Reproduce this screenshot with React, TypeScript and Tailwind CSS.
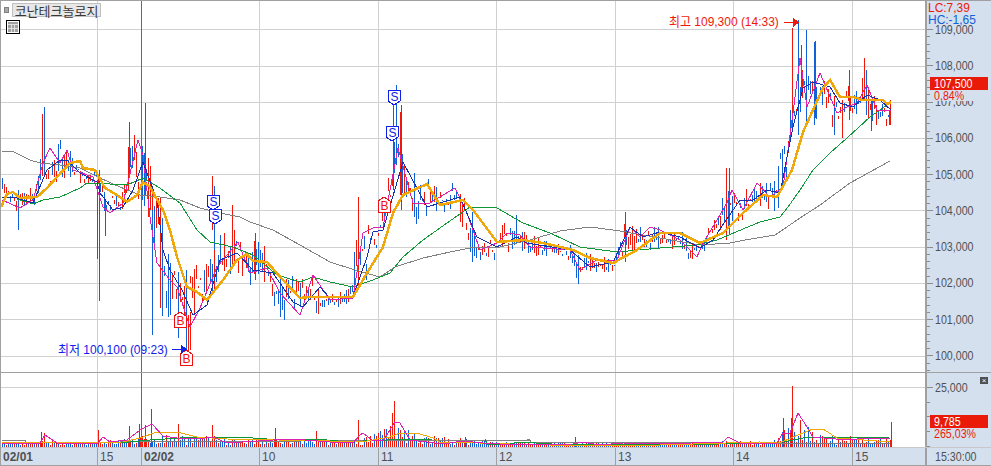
import React from "react";

type Pt = [number, number];
type Bar = [number, number, number, string];

const RED = "#f01808";
const BLUE = "#1060d8";

const gridY = [29, 66, 102, 138, 174, 210, 247, 283, 319, 356];
const gridX = [97, 259, 378, 496, 615, 733, 852];

const prices = ["109,000", "108,000", "107,000", "106,000", "105,000", "104,000", "103,000", "102,000", "101,000", "100,000"];

const gray: Pt[] = [[2, 152], [12, 151], [20, 155], [30, 160], [40, 163], [60, 165], [80, 168], [100, 178], [120, 187], [140, 195], [160, 197], [180, 200], [200, 208], [220, 213], [240, 217], [250, 222], [273, 230], [300, 245], [330, 262], [355, 270], [380, 277], [395, 267], [423, 258], [450, 252], [470, 248], [500, 247], [530, 240], [560, 231], [590, 227], [620, 231], [660, 238], [700, 245], [730, 243], [745, 240], [775, 235], [784, 229], [800, 218], [820, 205], [850, 183], [890, 161]];
const green: Pt[] = [[17, 199], [33, 204], [43, 200], [60, 197], [80, 188], [87, 183], [110, 184], [127, 185], [143, 178], [160, 188], [180, 203], [197, 230], [210, 242], [233, 247], [253, 255], [277, 275], [300, 282], [313, 277], [330, 282], [353, 287], [373, 280], [390, 273], [403, 257], [423, 240], [447, 223], [470, 207], [497, 208], [523, 223], [550, 233], [580, 247], [617, 252], [660, 248], [697, 245], [717, 240], [743, 229], [760, 222], [780, 217], [788, 207], [800, 190], [813, 170], [830, 153], [847, 138], [870, 117], [890, 103]];
const orange: Pt[] = [[1, 207], [7, 194], [13, 192], [20, 198], [37, 197], [47, 188], [57, 177], [70, 163], [80, 161], [83, 168], [95, 170], [105, 188], [117, 195], [127, 202], [137, 195], [143, 182], [150, 187], [163, 210], [170, 230], [177, 257], [187, 287], [197, 292], [207, 300], [223, 280], [237, 260], [247, 254], [253, 261], [267, 262], [283, 280], [300, 298], [310, 297], [330, 297], [353, 297], [367, 273], [383, 247], [393, 213], [403, 195], [427, 184], [440, 205], [463, 200], [473, 210], [497, 242], [523, 240], [543, 243], [573, 250], [590, 258], [613, 263], [637, 250], [660, 233], [680, 233], [700, 243], [723, 233], [743, 213], [763, 195], [777, 197], [792, 170], [803, 132], [823, 88], [830, 80], [840, 97], [853, 97], [863, 100], [883, 100], [887, 104], [891, 102]];
const navy: Pt[] = [[2, 197], [17, 198], [33, 203], [47, 170], [60, 160], [67, 160], [80, 173], [97, 182], [100, 193], [113, 210], [123, 207], [133, 190], [143, 162], [157, 200], [163, 250], [170, 270], [182, 290], [193, 315], [207, 305], [220, 260], [237, 253], [253, 270], [273, 273], [293, 302], [303, 307], [320, 287], [330, 298], [353, 297], [367, 257], [373, 232], [383, 230], [403, 162], [427, 207], [440, 203], [460, 197], [477, 237], [497, 247], [517, 237], [527, 243], [570, 250], [590, 267], [613, 262], [630, 227], [643, 237], [660, 232], [680, 237], [700, 248], [713, 240], [720, 229], [740, 200], [753, 200], [767, 190], [780, 193], [793, 127], [803, 88], [813, 82], [830, 87], [840, 103], [853, 107], [867, 95], [880, 100], [891, 110]];
const pink: Pt[] = [[2, 200], [20, 208], [33, 200], [43, 163], [50, 148], [60, 163], [67, 150], [73, 170], [93, 177], [103, 207], [110, 213], [123, 203], [138, 140], [143, 155], [150, 217], [157, 263], [170, 280], [177, 287], [190, 327], [200, 308], [217, 267], [238, 242], [250, 273], [267, 268], [280, 293], [300, 315], [313, 275], [330, 300], [353, 298], [363, 233], [373, 228], [383, 227], [398, 148], [413, 203], [430, 203], [455, 188], [467, 213], [480, 250], [497, 243], [507, 233], [520, 235], [530, 247], [570, 250], [580, 270], [597, 260], [617, 260], [630, 227], [640, 237], [650, 227], [660, 230], [680, 240], [697, 257], [702, 245], [727, 203], [732, 190], [743, 210], [757, 183], [770, 197], [783, 187], [793, 113], [800, 58], [807, 107], [820, 73], [837, 113], [847, 107], [857, 103], [867, 85], [877, 110], [891, 110]];

const volGray: Pt[] = [[2, 440], [25, 440], [26, 442], [120, 442], [300, 441], [530, 440], [531, 442], [700, 443], [890, 443]];
const volGreen: Pt[] = [[2, 442], [130, 442], [150, 440], [180, 438], [213, 437], [250, 437], [253, 438], [267, 439], [327, 440], [348, 442], [363, 441], [387, 440], [433, 439], [485, 439], [487, 444], [508, 444], [520, 442], [552, 444], [660, 445], [777, 443], [793, 440], [803, 438], [890, 437]];
const volOrange: Pt[] = [[2, 443], [123, 442], [140, 438], [157, 432], [177, 432], [197, 437], [227, 439], [330, 441], [340, 442], [367, 441], [390, 437], [400, 433], [417, 433], [433, 438], [440, 442], [480, 443], [510, 444], [550, 445], [660, 445], [727, 443], [760, 442], [780, 443], [793, 437], [813, 429], [823, 429], [837, 438], [890, 442]];
const volPink: Pt[] = [[2, 444], [40, 443], [45, 435], [57, 443], [98, 443], [103, 437], [110, 442], [127, 440], [140, 430], [152, 424], [163, 436], [177, 438], [197, 439], [213, 437], [227, 443], [273, 440], [293, 439], [330, 442], [353, 443], [360, 435], [363, 433], [372, 440], [383, 441], [395, 422], [400, 423], [410, 440], [443, 444], [463, 441], [483, 443], [517, 445], [573, 444], [583, 442], [600, 445], [623, 443], [660, 444], [723, 442], [728, 437], [740, 443], [777, 443], [783, 433], [790, 433], [798, 413], [807, 427], [813, 437], [847, 440], [867, 438], [890, 438]];

// high / low envelope of the minute bars: x, top, bottom
const env: [number, number, number][] = [[2, 178, 210], [10, 182, 205], [18, 183, 215], [25, 190, 205], [35, 185, 205], [40, 150, 190], [50, 160, 190], [60, 137, 180], [66, 136, 182], [72, 158, 182], [80, 165, 182], [90, 175, 186], [97, 165, 185], [105, 185, 220], [120, 195, 215], [129, 140, 200], [135, 130, 195], [145, 150, 210], [150, 150, 240], [155, 180, 290], [160, 185, 330], [165, 230, 310], [178, 250, 335], [185, 250, 350], [195, 260, 320], [203, 260, 310], [210, 200, 290], [220, 230, 290], [235, 220, 270], [250, 240, 290], [260, 235, 270], [270, 260, 305], [285, 280, 325], [300, 270, 325], [310, 265, 310], [320, 290, 315], [330, 290, 312], [345, 290, 305], [350, 280, 300], [358, 215, 290], [364, 215, 290], [370, 210, 262], [375, 220, 260], [380, 210, 240], [385, 198, 222], [392, 150, 200], [396, 120, 160], [400, 130, 195], [405, 150, 225], [410, 165, 230], [420, 180, 225], [428, 178, 215], [440, 188, 218], [450, 180, 210], [455, 178, 205], [465, 200, 240], [475, 232, 262], [490, 235, 265], [500, 225, 262], [510, 220, 250], [515, 225, 250], [530, 235, 255], [550, 240, 255], [570, 245, 265], [578, 255, 284], [585, 252, 270], [600, 258, 272], [615, 255, 270], [622, 222, 265], [632, 225, 255], [640, 224, 245], [650, 225, 250], [660, 225, 250], [670, 230, 250], [680, 230, 248], [690, 240, 262], [695, 245, 260], [705, 235, 250], [715, 210, 245], [725, 185, 240], [730, 190, 220], [740, 195, 225], [750, 175, 215], [755, 180, 210], [770, 180, 210], [778, 140, 210], [785, 120, 190], [792, 60, 170], [800, 50, 130], [806, 50, 125], [814, 60, 120], [825, 70, 110], [834, 80, 135], [842, 85, 130], [849, 75, 120], [858, 90, 115], [864, 70, 105], [870, 85, 125], [876, 100, 125], [885, 105, 125], [891, 110, 125]];

const spikes: Bar[] = [[42, 114, 170, RED], [44, 107, 175, BLUE], [18, 190, 230, BLUE], [97, 180, 259, BLUE], [99, 170, 301, RED], [105, 200, 236, BLUE], [129, 122, 175, RED], [145, 103, 195, BLUE], [152, 210, 335, BLUE], [178, 300, 338, BLUE], [186, 270, 351, BLUE], [188, 315, 351, RED], [190, 312, 350, RED], [212, 176, 230, RED], [214, 186, 250, BLUE], [232, 205, 255, RED], [255, 233, 280, BLUE], [358, 197, 290, RED], [396, 85, 165, BLUE], [393, 105, 190, BLUE], [400, 112, 195, RED], [401, 105, 210, BLUE], [472, 212, 262, BLUE], [516, 215, 240, BLUE], [578, 255, 284, BLUE], [625, 212, 262, RED], [726, 168, 240, RED], [729, 168, 235, RED], [792, 28, 118, RED], [798, 20, 135, BLUE], [801, 45, 95, RED], [806, 30, 125, BLUE], [814, 42, 125, BLUE], [815, 41, 118, RED], [834, 105, 135, BLUE], [842, 100, 138, RED], [849, 70, 120, BLUE], [864, 58, 100, RED], [866, 70, 115, BLUE], [871, 100, 131, BLUE], [876, 105, 125, RED], [889, 110, 125, BLUE], [890, 100, 125, RED]];

const volEnv: Pt[] = [[0, 2], [40, 3], [45, 8], [60, 2], [100, 4], [130, 8], [170, 12], [250, 6], [340, 5], [358, 12], [395, 20], [430, 10], [500, 3], [700, 2], [720, 5], [770, 3], [795, 24], [830, 12], [891, 6]];
const volSpikes: Bar[] = [[41, 432, 447, RED], [44, 433, 447, RED], [98, 430, 447, RED], [129, 426, 447, RED], [139, 424, 447, RED], [145, 425, 447, RED], [151, 409, 447, RED], [178, 424, 447, RED], [212, 425, 447, RED], [275, 428, 447, RED], [316, 431, 447, RED], [358, 420, 447, RED], [384, 429, 447, RED], [392, 413, 447, RED], [394, 401, 447, RED], [465, 437, 447, RED], [575, 437, 447, RED], [783, 418, 447, RED], [791, 418, 447, RED], [792, 386, 447, RED], [800, 420, 447, RED], [891, 422, 447, RED]];

let seed = 7;
const rnd = () => {
  seed = (seed * 16807) % 2147483647;
  return seed / 2147483647;
};

const lerp = (pts: Pt[], x: number) => {
  for (let i = 1; i < pts.length; i++) {
    if (x <= pts[i][0]) {
      const [x0, y0] = pts[i - 1];
      const [x1, y1] = pts[i];
      return y0 + ((y1 - y0) * (x - x0)) / (x1 - x0);
    }
  }
  return pts[pts.length - 1][1];
};

const topPts: Pt[] = env.map(e => [e[0], e[1]]);
const botPts: Pt[] = env.map(e => [e[0], e[2]]);

const priceBars: Bar[] = [];
for (let x = 2; x < 891; x += 2) {
  const t = lerp(topPts, x);
  const b = lerp(botPts, x);
  const h = b - t;
  const y1 = Math.round(t + h * rnd() * 0.75);
  const y2 = Math.round(b - h * rnd() * 0.75);
  priceBars.push([x, Math.min(y1, y2), Math.max(y1, y2) + 1, rnd() > 0.5 ? RED : BLUE]);
}

const volBars: Bar[] = [];
for (let x = 2; x < 891; x += 2) {
  volBars.push([x, Math.round(445 - rnd() * lerp(volEnv, x)), 447, rnd() > 0.5 ? RED : BLUE]);
}

const line = (pts: Pt[]) => pts.map(p => p.join(",")).join(" ");

// the HTS font is tall and narrow, squeeze Liberation Sans to its width
const squeezed = "inline-block origin-left scale-x-[0.82] whitespace-nowrap";
const squeezedWide = "inline-block origin-left scale-x-[0.92] whitespace-nowrap";

function Bars({ data }: { data: Bar[] }) {
  return (
    <>
      {data.map((b, i) => (
        <line key={i} x1={b[0] + 0.5} x2={b[0] + 0.5} y1={b[1]} y2={b[2]} stroke={b[3]} strokeWidth="1" />
      ))}
    </>
  );
}

function Marker({ x, y, kind }: { x: number; y: number; kind: "S" | "B" }) {
  const c = kind === "S" ? "#1020e8" : "#f01010";
  const pts = kind === "S"
    ? `${x},${y} ${x + 12},${y} ${x + 12},${y + 11} ${x + 6},${y + 15} ${x},${y + 11}`
    : `${x + 6},${y} ${x + 12},${y + 4} ${x + 12},${y + 15} ${x},${y + 15} ${x},${y + 4}`;
  return (
    <g>
      <polygon points={pts} fill="#fff" stroke={c} strokeWidth="1" />
      <text x={x + 6.5} y={kind === "S" ? y + 11 : y + 13} textAnchor="middle" fontSize="12" fill={c} fontFamily="Liberation Sans, sans-serif">{kind}</text>
    </g>
  );
}

function GridV({ y1, y2 }: { y1: number; y2: number }) {
  return (
    <>
      {gridX.map(x => (
        <line key={x} x1={x + 0.5} x2={x + 0.5} y1={y1} y2={y2} stroke="#d0d0d0" />
      ))}
      <line x1={141.5} x2={141.5} y1={y1} y2={y2} stroke="#b84848" />
    </>
  );
}

function PriceChart() {
  return (
    <svg viewBox="1 1 924 371" className="block w-[924px] h-[371px]" shapeRendering="crispEdges">
      {gridY.map(y => (
        <line key={y} x1={1} x2={925} y1={y + 0.5} y2={y + 0.5} stroke="#d0d0d0" />
      ))}
      <GridV y1={1} y2={372} />
      <Bars data={priceBars} />
      <Bars data={spikes} />
      <polyline points={line(gray)} fill="none" stroke="#808080" />
      <polyline points={line(green)} fill="none" stroke="#109838" />
      <polyline points={line(pink)} fill="none" stroke="#e020b0" />
      <polyline points={line(navy)} fill="none" stroke="#1830b0" />
      <polyline points={line(orange)} fill="none" stroke="#f0a808" strokeWidth="2.5" />
      <Marker x={207} y={195} kind="S" />
      <Marker x={209} y={209} kind="S" />
      <Marker x={388} y={90} kind="S" />
      <Marker x={386} y={126} kind="S" />
      <Marker x={378} y={197} kind="B" />
      <Marker x={174} y={312} kind="B" />
      <Marker x={180} y={350} kind="B" />
      <path d="M784 22.5H793M793 18V27L798 22.5Z" fill={RED} stroke={RED} />
      <path d="M172 349.5H181M181 345V354L186 349.5Z" fill="#1020e8" stroke="#1020e8" />
    </svg>
  );
}

function VolumeChart() {
  return (
    <svg viewBox="1 373 924 74" className="block w-[924px] h-[74px]" shapeRendering="crispEdges">
      <line x1={1} x2={925} y1={387.5} y2={387.5} stroke="#d0d0d0" />
      <GridV y1={373} y2={447} />
      <Bars data={volBars} />
      <Bars data={volSpikes} />
      <polyline points={line(volGray)} fill="none" stroke="#808080" />
      <polyline points={line(volGreen)} fill="none" stroke="#109838" />
      <polyline points={line(volOrange)} fill="none" stroke="#f0a808" />
      <polyline points={line(volPink)} fill="none" stroke="#e020b0" />
    </svg>
  );
}

function AxisTicks({ h, first, step, count }: { h: number; first: number; step: number; count: number }) {
  const ticks = [];
  for (let i = -3; i < count; i++) {
    const y = Math.round(first + step * i);
    if (y < 0 || y > h) continue;
    ticks.push(<line key={i} x1={0} x2={i % 5 === 0 ? 6 : 3} y1={y + 0.5} y2={y + 0.5} stroke="#8c8c8c" />);
  }
  return (
    <svg className="absolute left-0 top-0 w-[8px]" height={h} shapeRendering="crispEdges">
      {ticks}
    </svg>
  );
}

function TimeCell({ w, label, bold }: { w: string; label: string; bold?: boolean }) {
  return (
    <div className={`${w} h-full border-l border-[#a0a0a0] first:border-l-0 pl-[2px] flex items-center text-[13px] ${bold ? "font-bold" : ""}`}>
      <span className={squeezedWide}>{label}</span>
    </div>
  );
}

export default function App() {
  return (
    <div className="w-[991px] h-[466px] overflow-hidden bg-white border-l border-t border-b border-[#a0a0a0] text-[#505050] font-['Liberation_Sans','Noto_Sans_CJK_KR',sans-serif]">
      <div className="flex h-[371px]">
        <div className="relative w-[924px]">
          <PriceChart />
          <div className="absolute left-[3px] top-[2px] flex items-center gap-[3px]">
            <span className="w-[5px] h-[6px] bg-[#a8a8a8] border border-[#808080]" />
            <span className="h-[14px] w-[89px] flex items-center justify-center bg-[#e8e8e8] border border-[#c0c0c0] text-[13px] leading-none text-[#383838] font-['Noto_Sans_CJK_KR',sans-serif]">코난테크놀로지</span>
          </div>
          <div className="absolute left-[5px] top-[19px] w-[14px] h-[14px] border border-black bg-white p-[1px]">
            <svg viewBox="0 0 10 10" className="block w-full h-full" shapeRendering="crispEdges">
              <rect width="10" height="10" fill="#a0a0a0" />
              <path d="M0 2.5H10M3.5 2.5V10M6.5 2.5V10M0 6H10" stroke="#e0e0e0" />
            </svg>
          </div>
          <span className={`absolute left-[668px] top-[13px] text-[13px] leading-[15px] text-[#f01808] ${squeezedWide}`}>최고 109,300 (14:33)</span>
          <span className={`absolute left-[57px] top-[341px] text-[13px] leading-[15px] text-[#1020e8] ${squeezedWide}`}>최저 100,100 (09:23)</span>
        </div>
        <div className="relative w-[66px] bg-[#d5e0ef] border-l-2 border-[#a0a0a0] pt-[10px]">
          <AxisTicks h={371} first={28} step={7.25} count={50} />
          <div className="flex flex-col">
            {prices.map(p => (
              <div key={p} className="h-[36.25px] pl-[8px] flex items-center text-[13px] leading-none">
                <span className={squeezed}>{p}</span>
              </div>
            ))}
          </div>
          <div className="absolute left-0 top-0 w-full h-[24px] bg-[#d5e0ef] pl-[1px] pt-[1px] text-[13px] leading-[12px]">
            <div className="text-[#f01808]"><span className={squeezedWide}>LC:7,39</span></div>
            <div className="text-[#1060d8]"><span className={squeezedWide}>HC:-1,65</span></div>
          </div>
          <div className="absolute left-[3px] top-[76px] w-[58px]">
            <div className="h-[13px] bg-[#ea1a08] text-white text-[13px] leading-[13px] pl-[4px]"><span className={squeezed}>107,500</span></div>
            <div className="h-[11px] bg-[#d5e0ef] text-[#f01808] text-[13px] leading-[11px] pl-[4px]"><span className={squeezed}>0,84%</span></div>
          </div>
        </div>
      </div>
      <div className="h-px bg-[#a0a0a0]" />
      <div className="flex h-[74px]">
        <div className="w-[924px]">
          <VolumeChart />
        </div>
        <div className="relative w-[66px] bg-[#d5e0ef] border-l-2 border-[#a0a0a0] pt-[7px]">
          <AxisTicks h={74} first={14} step={14.7} count={5} />
          <div className="h-[15px] pl-[8px] flex items-center text-[13px] leading-none"><span className={squeezed}>25,000</span></div>
          <span className="absolute right-[3px] top-[4px] w-[8px] h-[7px] bg-[#505050] text-white text-[8px] leading-[7px] text-center">×</span>
          <div className="absolute left-[3px] top-[42px] w-[58px]">
            <div className="h-[13px] bg-[#ea1a08] text-white text-[13px] leading-[13px] pl-[4px]"><span className={squeezed}>9,785</span></div>
            <div className="h-[12px] text-[#f01808] text-[13px] leading-[12px] pl-[4px]"><span className={squeezed}>265,03%</span></div>
          </div>
        </div>
      </div>
      <div className="flex h-[18px] bg-[#d5e0ef] border-t border-[#c8c8c8]">
        <TimeCell w="w-[96px]" label="02/01" bold />
        <TimeCell w="w-[44px]" label="15" />
        <TimeCell w="w-[118px]" label="02/02" bold />
        <TimeCell w="w-[119px]" label="10" />
        <TimeCell w="w-[118px]" label="11" />
        <TimeCell w="w-[119px]" label="12" />
        <TimeCell w="w-[118px]" label="13" />
        <TimeCell w="w-[119px]" label="14" />
        <TimeCell w="w-[73px]" label="15" />
        <div className="flex-1 h-full border-l-2 border-[#a0a0a0] pl-[8px] flex items-center text-[13px]"><span className={squeezed}>15:30:00</span></div>
      </div>
    </div>
  );
}
